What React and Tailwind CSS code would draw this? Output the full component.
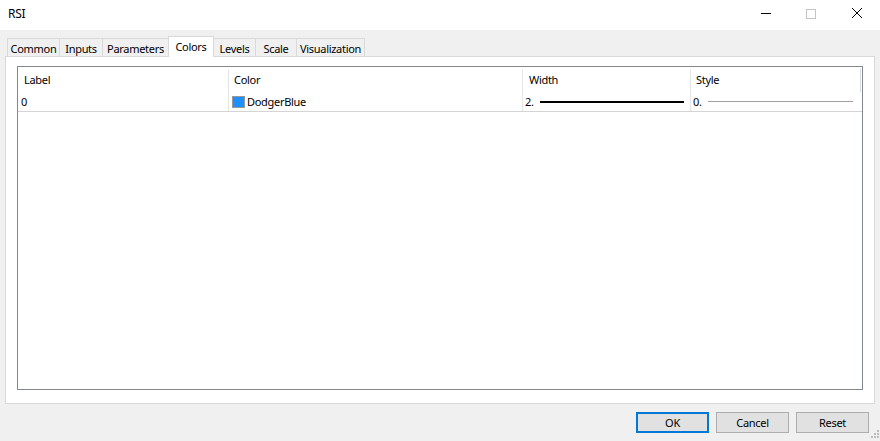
export default function App() {
  const tabs = [
    { name: "Common", w: 52 },
    { name: "Inputs", w: 43 },
    { name: "Parameters", w: 66 },
    { name: "Colors", w: 46, active: true },
    { name: "Levels", w: 41 },
    { name: "Scale", w: 41 },
    { name: "Visualization", w: 69, last: true },
  ];
  return (
    <div className="relative w-[880px] h-[441px] bg-[#f0f0f0] flex flex-col text-[11px] tracking-[-0.3px] text-black overflow-hidden font-['Noto_Sans',sans-serif]">
      {/* Title bar */}
      <div className="h-[30px] bg-white flex shrink-0">
        <div className="flex-1 pl-[8px] pt-[5px] leading-[18px] text-[12px]">RSI</div>
        <div className="w-[46px] h-[30px]">
          <svg width="46" height="30">
            <path d="M19 13.5h10" stroke="#000" strokeWidth="1" />
          </svg>
        </div>
        <div className="w-[46px] h-[30px]">
          <svg width="46" height="30">
            <rect x="18.5" y="9.5" width="9" height="9" fill="none" stroke="#c4c4c4" strokeWidth="1" />
          </svg>
        </div>
        <div className="w-[46px] h-[30px]">
          <svg width="46" height="30">
            <path d="M18 8L28 18M28 8L18 18" stroke="#000" strokeWidth="1" />
          </svg>
        </div>
      </div>

      {/* Body */}
      <div className="flex flex-col pl-[5px] pr-[5px] pt-[6px]">
        {/* Tab strip */}
        <div className="h-[20px] flex items-end pl-[2px] relative z-10">
          {tabs.map((t, i) => {
            const prevActive = i > 0 && tabs[i - 1].active;
            if (t.active) {
              return (
                <div
                  key={t.name}
                  className="h-[21px] mb-[-1px] bg-white border-l border-t border-r border-[#d9d9d9] flex justify-center leading-[16px] pt-[2px] shrink-0"
                  style={{ width: t.w }}
                >
                  {t.name}
                </div>
              );
            }
            return (
              <div
                key={t.name}
                className={
                  "h-[18px] bg-[#f0f0f0] border-t border-[#d9d9d9] flex justify-center leading-[16px] pt-[2px] shrink-0 " +
                  (prevActive ? "" : "border-l ") +
                  (t.last ? "border-r" : "")
                }
                style={{ width: t.w }}
              >
                {t.name}
              </div>
            );
          })}
        </div>

        {/* Panel */}
        <div className="h-[348px] bg-white border border-[#d9d9d9] flex flex-col pl-[11px] pt-[9px] pr-[11px] pb-[13px]">
          <div className="flex-1 border border-[#828790] bg-white flex flex-col">
            {/* Header */}
            <div className="h-[25px] pt-[2px] flex">
              <div className="w-[211px] border-r border-[#e5e5e5] pl-[6px] leading-[20px] pt-[1px]">Label</div>
              <div className="w-[294px] border-r border-[#e5e5e5] pl-[5px] leading-[20px] pt-[1px]">Color</div>
              <div className="w-[168px] border-r border-[#e5e5e5] pl-[6px] leading-[20px] pt-[1px]">Width</div>
              <div className="w-[171px] pl-[5px] leading-[20px] pt-[1px] flex">
                <span className="flex-1">Style</span>
                <div className="w-[1px] h-[23px] mt-[-1px] mr-[1px] bg-[#dadada]"></div>
              </div>
            </div>
            {/* Row */}
            <div className="h-[20px] flex border-b border-[#d4d4d4]">
              <div className="w-[211px] border-r border-[#e5e5e5] pl-[3px] leading-[19px]">0</div>
              <div className="w-[294px] border-r border-[#e5e5e5] pl-[3px] flex items-center">
                <div className="w-[13px] h-[12px] bg-[#1e90ff] border border-[#999999] mr-[2px] shrink-0"></div>
                <span className="leading-[19px]">DodgerBlue</span>
              </div>
              <div className="w-[168px] border-r border-[#e5e5e5] pl-[2px] flex items-center">
                <span className="leading-[19px] w-[15px] shrink-0">2.</span>
                <div className="w-[144px] h-[2px] bg-black"></div>
              </div>
              <div className="w-[171px] pl-[2px] flex items-center">
                <span className="leading-[19px] w-[15px] shrink-0">0.</span>
                <div className="w-[145px] h-[1px] bg-[#a0a0a0]"></div>
              </div>
            </div>
          </div>
        </div>
      </div>

      {/* Buttons */}
      <div className="flex justify-end gap-[7px] pr-[11px] pt-[8px]">
        <button className="w-[73px] h-[21px] border-2 border-[#0078d7] bg-[#e1e1e1] flex items-center justify-center leading-[16px]">OK</button>
        <button className="w-[73px] h-[21px] border border-[#adadad] bg-[#e1e1e1] flex items-center justify-center leading-[16px]">Cancel</button>
        <button className="w-[73px] h-[21px] border border-[#adadad] bg-[#e1e1e1] flex items-center justify-center leading-[16px]">Reset</button>
      </div>

      {/* Resize grip */}
      <svg className="absolute right-0 bottom-0" width="12" height="12" viewBox="0 0 12 12">
        <rect x="9" y="1" width="2" height="2" fill="#bcbcbc" />
        <rect x="6" y="4" width="2" height="2" fill="#bcbcbc" />
        <rect x="9" y="4" width="2" height="2" fill="#bcbcbc" />
        <rect x="3" y="7" width="2" height="2" fill="#bcbcbc" />
        <rect x="6" y="7" width="2" height="2" fill="#bcbcbc" />
        <rect x="9" y="7" width="2" height="2" fill="#bcbcbc" />
      </svg>
    </div>
  );
}
